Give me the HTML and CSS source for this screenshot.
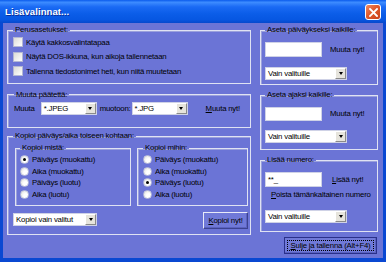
FILE: index.html
```html
<!DOCTYPE html>
<html lang="fi">
<head>
  <meta charset="UTF-8">
  <meta name="viewport" content="width=device-width, initial-scale=1.0">
  <title>Lisävalinnat</title>
  <link rel="stylesheet" href="styles.css">
</head>
<body>
  <div class="window">
    <div class="titlebar">
      <span class="title">Lisävalinnat...</span>
      <span class="close">
        <svg width="9" height="9" viewBox="0 0 9 9"><path d="M1 1L8 8M8 1L1 8" stroke="#fff" stroke-width="1.8" stroke-linecap="square"/></svg>
      </span>
    </div>

    <div class="client">
      <div class="col-left">
        <fieldset class="group g-basic">
          <legend>Perusasetukset:</legend>
          <label class="check"><span class="box"></span>Käytä kakkosvalintatapaa</label>
          <label class="check"><span class="box"></span>Näytä DOS-ikkuna, kun aikoja tallennetaan</label>
          <label class="check"><span class="box"></span>Tallenna tiedostonimet heti, kun niitä muutetaan</label>
        </fieldset>

        <fieldset class="group g-ext">
          <legend>Muuta päätettä:</legend>
          <div class="ext-row">
            <span class="lbl-from">Muuta</span>
            <div class="combo combo-ext"><span class="combo-text">*.JPEG</span><span class="combo-btn"></span></div>
            <span class="lbl-to">muotoon:</span>
            <div class="combo combo-ext"><span class="combo-text">*.JPG</span><span class="combo-btn"></span></div>
            <span class="link link-ext"><u>M</u>uuta nyt!</span>
          </div>
        </fieldset>

        <fieldset class="group g-copy">
          <legend>Kopioi päiväys/aika toiseen kohtaan:</legend>
          <div class="copy-cols">
            <fieldset class="group sub sub-from">
              <legend>Kopioi mistä:</legend>
              <label class="opt"><span class="radio on"></span>Päiväys (muokattu)</label>
              <label class="opt"><span class="radio"></span>Aika (muokattu)</label>
              <label class="opt"><span class="radio"></span>Päiväys (luotu)</label>
              <label class="opt"><span class="radio"></span>Aika (luotu)</label>
            </fieldset>
            <fieldset class="group sub sub-to">
              <legend>Kopioi mihin:</legend>
              <label class="opt"><span class="radio"></span>Päiväys (muokattu)</label>
              <label class="opt"><span class="radio"></span>Aika (muokattu)</label>
              <label class="opt"><span class="radio on"></span>Päiväys (luotu)</label>
              <label class="opt"><span class="radio"></span>Aika (luotu)</label>
            </fieldset>
          </div>
          <div class="copy-foot">
            <div class="combo combo-copy"><span class="combo-text">Kopioi vain valitut</span><span class="combo-btn"></span></div>
            <button class="btn btn-copy"><u>K</u>opioi nyt!</button>
          </div>
        </fieldset>
      </div>

      <div class="col-right">
        <fieldset class="group g-side">
          <legend>Aseta päiväykseksi kaikille:</legend>
          <div class="side-row">
            <span class="field"></span>
            <span class="link">Muuta nyt!</span>
          </div>
          <div class="combo combo-all"><span class="combo-text">Vain valituille</span><span class="combo-btn"></span></div>
        </fieldset>

        <fieldset class="group g-side">
          <legend>Aseta ajaksi kaikille:</legend>
          <div class="side-row">
            <span class="field"></span>
            <span class="link">Muuta nyt!</span>
          </div>
          <div class="combo combo-all"><span class="combo-text">Vain valituille</span><span class="combo-btn"></span></div>
        </fieldset>

        <fieldset class="group g-num">
          <legend>Lisää numero:</legend>
          <div class="side-row">
            <span class="field">**_</span>
            <span class="link link-add"><u>L</u>isää nyt!</span>
          </div>
          <div class="remove"><u>P</u>oista tämänkaltainen numero</div>
          <div class="combo combo-all"><span class="combo-text">Vain valituille</span><span class="combo-btn"></span></div>
        </fieldset>

        <button class="btn btn-close"><span class="focus"><u>S</u>ulje ja tallenna (Alt+F4)</span></button>
      </div>
    </div>
  </div>
</body>
</html>
```

FILE: styles.css
```css
/* Reset */
* {
  box-sizing: border-box;
}

body {
  margin: 0;
  font-family: 'Liberation Sans', Arial, sans-serif;
  font-size: 7.8px;
  letter-spacing: -0.2px;
  color: #000;
}

u {
  text-decoration: underline;
}

/* Window frame */
.window {
  width: 386px;
  height: 262px;
  display: flex;
  flex-direction: column;
  background: #0a48d2;
}

.titlebar {
  height: 23px;
  display: flex;
  align-items: center;
  padding: 0 5px 0 5px;
  background: linear-gradient(to bottom, #0a5bec 0%, #3d8cff 10%, #1a6af4 30%, #0b5de8 60%, #0757e2 85%, #0548cc 100%);
}

.title {
  color: #fff;
  font-weight: bold;
  font-size: 9.5px;
  letter-spacing: 0.1px;
  text-shadow: 1px 1px 0 #0a2f9a;
}

.close {
  margin-left: auto;
  width: 16px;
  height: 16px;
  margin-top: 1px;
  display: flex;
  align-items: center;
  justify-content: center;
  border: 1px solid #fff;
  border-radius: 3px;
  background: linear-gradient(135deg, #f08a62 0%, #e05a2c 45%, #c8401a 100%);
}

.client {
  flex: 1;
  margin: 0 3px 4px;
  padding: 3px 5px 0 4px;
  display: flex;
  gap: 9px;
  background: #6b74d6;
}

/* Group boxes */
.group {
  margin: 0;
  padding: 2px 5px 0;
  min-width: 0;
  border: 1px solid #dfe2f3;
  box-shadow: inset 1px 1px 0 #9aa0dc;
}

legend {
  padding: 0 2px;
  font-size: 7.8px;
  line-height: 8px;
  white-space: nowrap;
}

.col-left {
  width: 244px;
  display: flex;
  flex-direction: column;
}

.col-right {
  width: 118px;
  display: flex;
  flex-direction: column;
}

.g-basic {
  height: 58px;
  padding-top: 1px;
}

.check {
  display: flex;
  align-items: center;
  height: 14.5px;
  white-space: nowrap;
}

.box {
  width: 10px;
  height: 10px;
  margin-right: 3px;
  border: 1px solid #b4b8d4;
  background: linear-gradient(135deg, #dcdcd6, #fff);
}

.g-ext {
  height: 37px;
  margin-top: 6.5px;
  padding: 3px 5px 0 6px;
}

.ext-row {
  display: flex;
  align-items: center;
  white-space: nowrap;
}

.lbl-from {
  margin-right: 6px;
}

.lbl-to {
  margin: 0 1px 0 3px;
}

.link {
  white-space: nowrap;
}

.link-ext {
  margin-left: 18px;
}

.g-copy {
  height: 103px;
  margin-top: 4.5px;
  padding: 4px 2px 0 5px;
}

.copy-cols {
  display: flex;
  gap: 6px;
  margin-left: 2px;
}

.sub {
  height: 62px;
  padding: 1.5px 4px 0;
}

.sub-from {
  width: 116px;
}

.sub-to {
  width: 111px;
  padding-left: 5px;
}

.opt {
  display: flex;
  align-items: center;
  height: 11.7px;
  white-space: nowrap;
}

.radio {
  width: 9px;
  height: 9px;
  margin-right: 3px;
  border-radius: 50%;
  border: 1px solid #c0c3dc;
  background: radial-gradient(circle at 65% 65%, #fff 30%, #dcdcd6 100%);
  display: flex;
  align-items: center;
  justify-content: center;
}

.radio.on::after {
  content: "";
  width: 3px;
  height: 3px;
  border-radius: 50%;
  background: #000;
}

.copy-foot {
  display: flex;
  justify-content: space-between;
  align-items: flex-start;
  margin-top: 6px;
}

/* Controls */
.combo {
  display: flex;
  align-items: center;
  height: 13px;
  padding-left: 2px;
  background: #fff;
  border: 1px solid #cfd2e6;
}

.combo-text {
  white-space: nowrap;
}

.combo-btn {
  margin-left: auto;
  width: 11px;
  height: 11px;
  display: flex;
  align-items: center;
  justify-content: center;
  background: #e6e4dc;
  border: 1px solid;
  border-color: #fff #8a8a8a #8a8a8a #fff;
}

.combo-btn::after {
  content: "";
  border-left: 2.5px solid transparent;
  border-right: 2.5px solid transparent;
  border-top: 3px solid #000;
}

.combo-ext {
  width: 56px;
}

.combo-copy {
  width: 84px;
  margin-top: 1px;
}

.combo-all {
  width: 82px;
}

.field {
  width: 57px;
  height: 15px;
  padding: 2px 2px 0;
  line-height: 10px;
  background: #fff;
  border: 1px solid #cfd2e6;
}

.btn {
  font: inherit;
  letter-spacing: inherit;
  color: #000;
  padding: 0;
  white-space: nowrap;
  background: #7079d8;
  border: 1px solid;
  border-color: #e8eaf8 #3c4290 #3c4290 #e8eaf8;
  box-shadow: inset -1px -1px 0 #5a62c0;
}

.btn-copy {
  width: 45px;
  height: 17px;
}

/* Right column */
.g-side {
  height: 58.5px;
  padding: 7.5px 4px 0;
}

.g-side + .g-side,
.g-num {
  margin-top: 6.5px;
}

.side-row {
  display: flex;
  align-items: center;
  gap: 8px;
  margin-bottom: 10px;
}

.g-side + .g-side .side-row .field {
  height: 14px;
}

.g-side + .g-side .side-row {
  margin-bottom: 9px;
}

.link-add {
  margin-left: 2px;
}

.g-num {
  height: 76px;
  padding: 7.5px 4px 0;
}

.g-num .side-row {
  margin-bottom: 3px;
}

.remove {
  height: 10px;
  line-height: 10px;
  padding-left: 6px;
  margin-bottom: 10px;
  white-space: nowrap;
}

.btn-close {
  width: 93px;
  height: 17px;
  margin: 5px 1px 0 auto;
  border-color: #e8eaf8 #1e2470 #1e2470 #e8eaf8;
  outline: 1px solid #2a308a;
  outline-offset: -1px;
}

.focus {
  display: block;
  margin: 2px;
  line-height: 9px;
  border: 1px dotted #000;
}
```
